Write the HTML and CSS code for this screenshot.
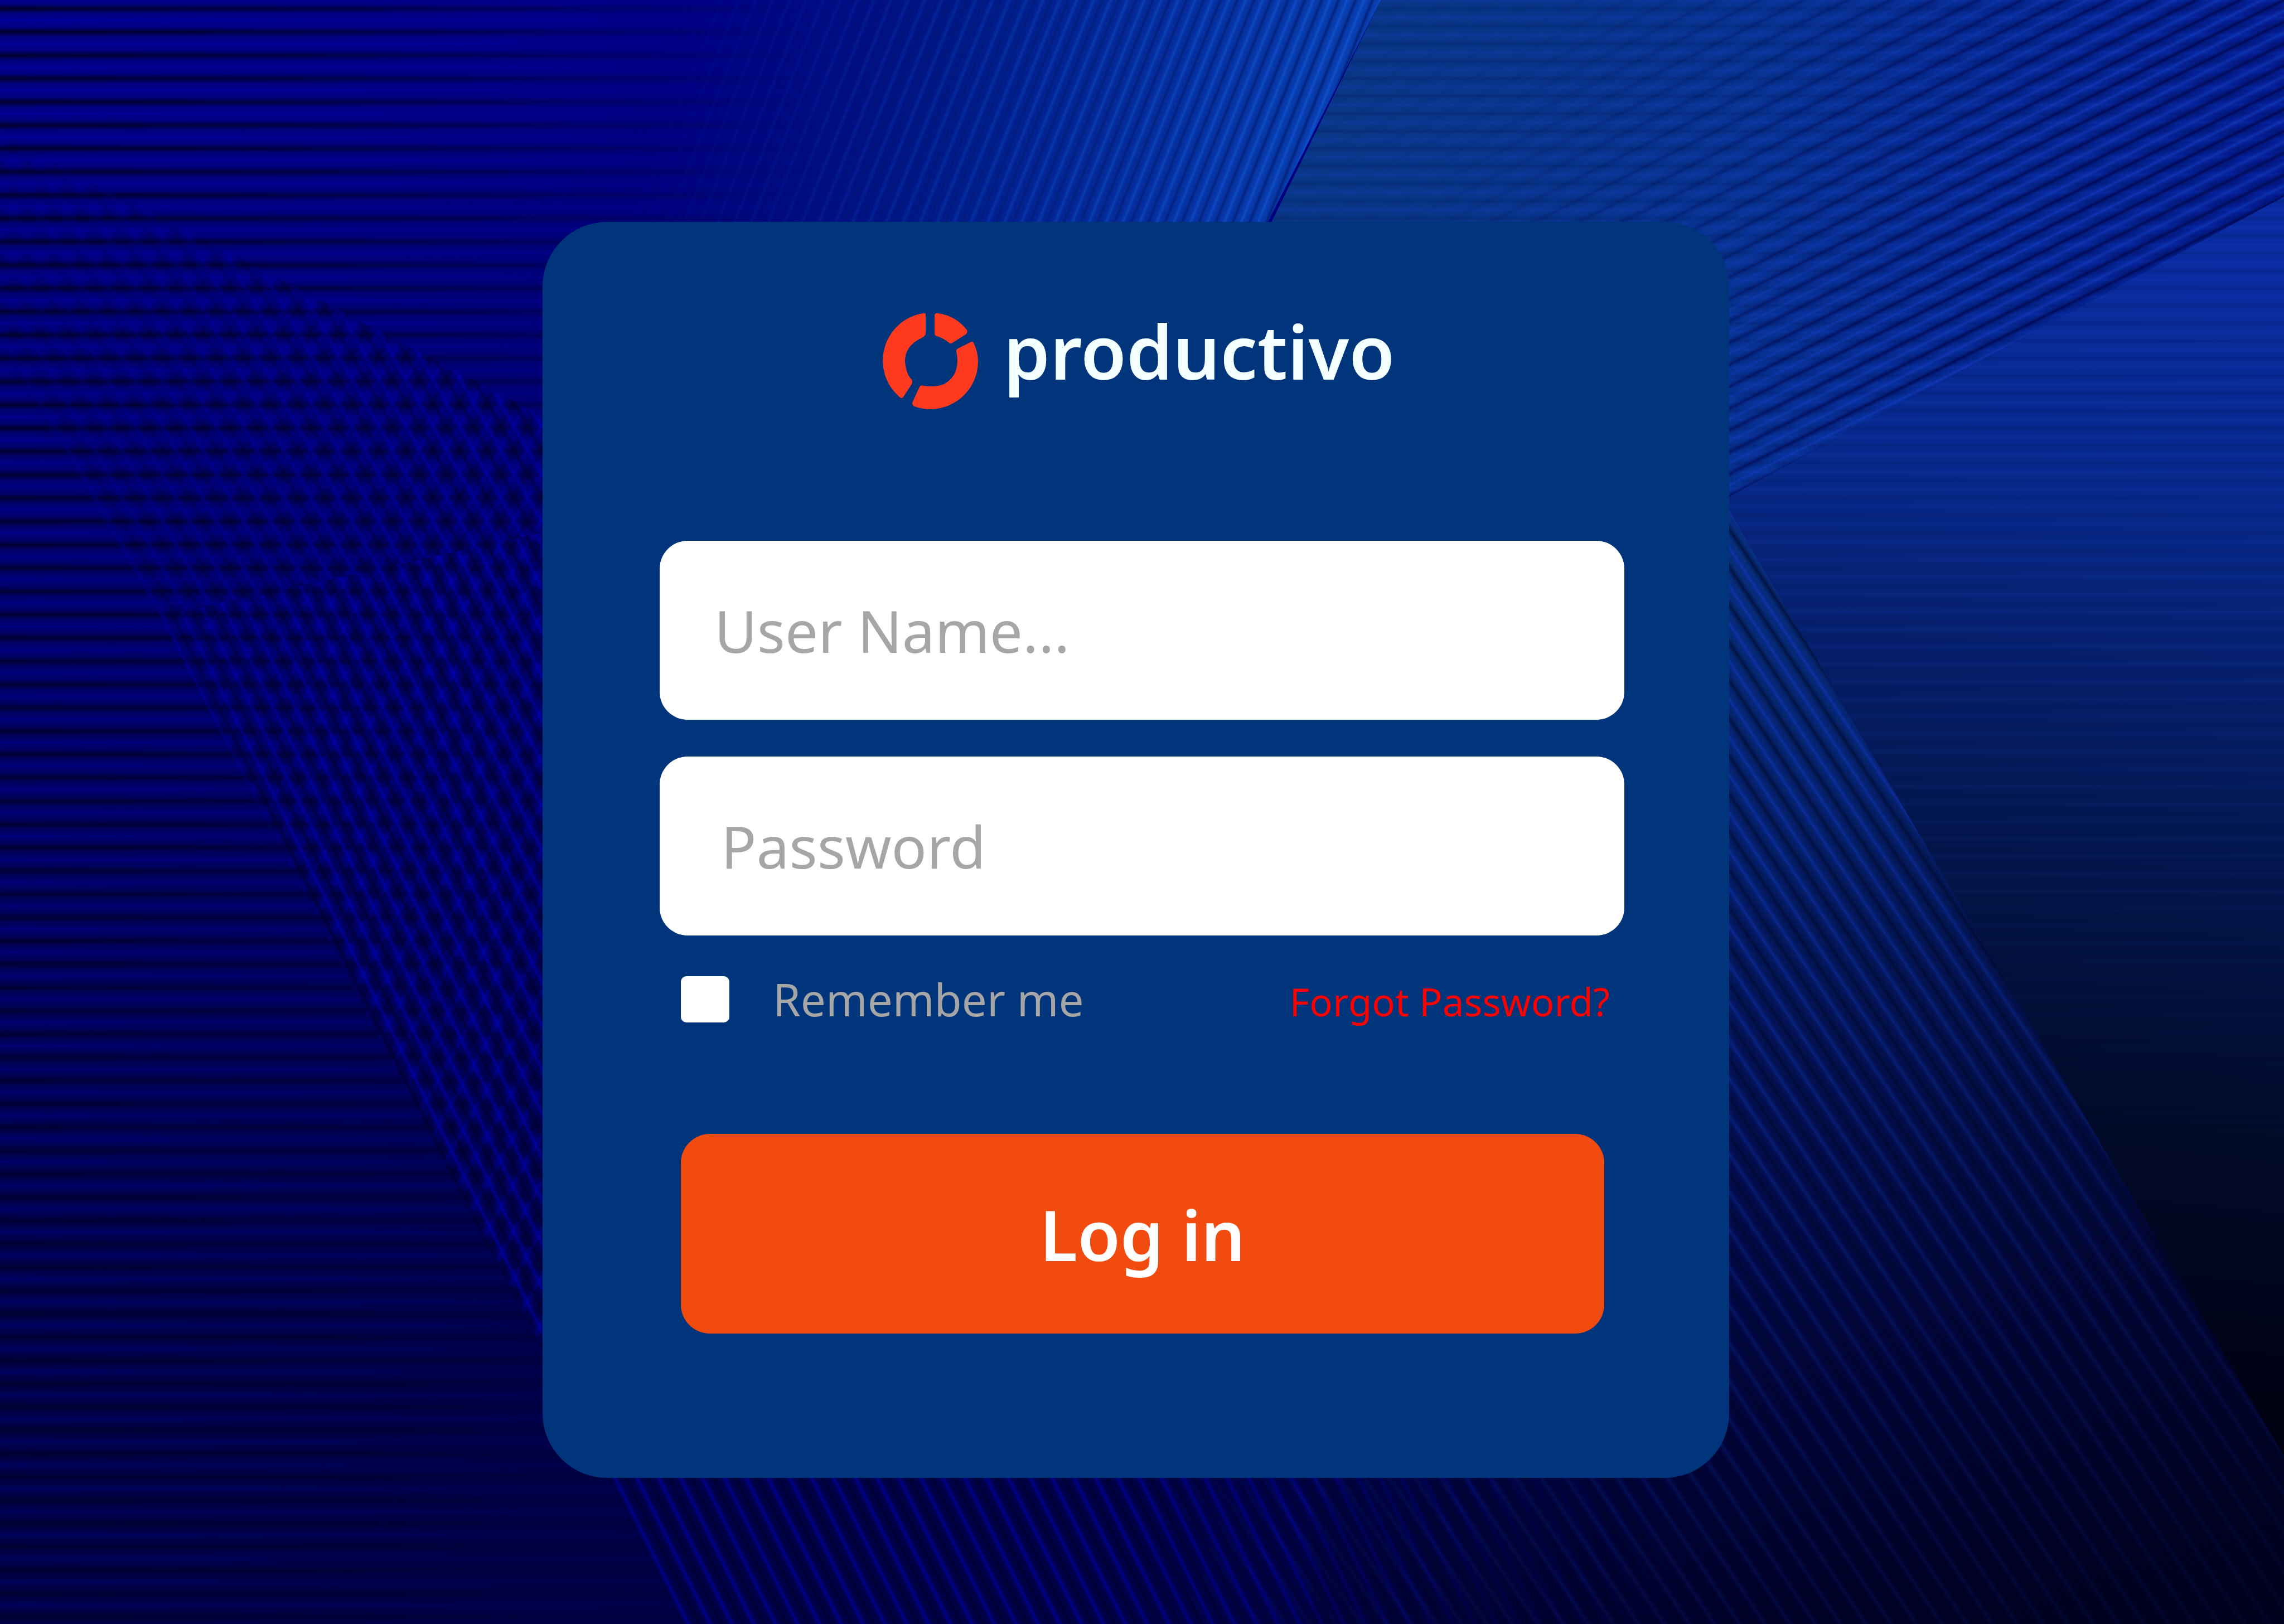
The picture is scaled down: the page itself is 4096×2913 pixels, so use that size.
FILE: index.html
```html
<!DOCTYPE html>
<html lang="en">
<head>
<meta charset="utf-8">
<meta name="viewport" content="width=device-width, initial-scale=1">
<title>Productivo – Log in</title>
<link rel="stylesheet" href="styles.css">
</head>
<body>
<svg class="backdrop" viewBox="0 0 1568 1115" preserveAspectRatio="none" aria-hidden="true">
  <defs>
    <linearGradient id="left-base" x1="0" y1="0" x2="0" y2="1">
      <stop offset="0" stop-color="#00008a"/>
      <stop offset=".3" stop-color="#000070"/>
      <stop offset=".6" stop-color="#00005a"/>
      <stop offset=".85" stop-color="#000046"/>
      <stop offset="1" stop-color="#000044"/>
    </linearGradient>
    <linearGradient id="top-glow" gradientUnits="userSpaceOnUse" x1="400" y1="0" x2="930" y2="120">
      <stop offset="0" stop-color="#000078" stop-opacity="0"/>
      <stop offset=".45" stop-color="#001684"/>
      <stop offset="1" stop-color="#0a42b4"/>
    </linearGradient>
    <linearGradient id="fan-base" gradientUnits="userSpaceOnUse" x1="900" y1="60" x2="1568" y2="160">
      <stop offset="0" stop-color="#0a3886"/>
      <stop offset=".45" stop-color="#083490"/>
      <stop offset="1" stop-color="#041890"/>
    </linearGradient>
    <linearGradient id="right-base" gradientUnits="userSpaceOnUse" x1="1480" y1="170" x2="1400" y2="940">
      <stop offset="0" stop-color="#0a2ca2"/>
      <stop offset=".22" stop-color="#08288a"/>
      <stop offset=".5" stop-color="#041852"/>
      <stop offset=".75" stop-color="#020c2c"/>
      <stop offset="1" stop-color="#000214"/>
    </linearGradient>
    <linearGradient id="weave-base" gradientUnits="userSpaceOnUse" x1="1220" y1="380" x2="1220" y2="1115">
      <stop offset="0" stop-color="#08307c"/>
      <stop offset=".35" stop-color="#041a60"/>
      <stop offset=".7" stop-color="#020850"/>
      <stop offset="1" stop-color="#000038"/>
    </linearGradient>
    <linearGradient id="corner-shade" gradientUnits="userSpaceOnUse" x1="1100" y1="700" x2="1540" y2="1115">
      <stop offset="0" stop-color="#000010" stop-opacity="0"/>
      <stop offset="1" stop-color="#000010" stop-opacity=".7"/>
    </linearGradient>

    <!-- Repeating soft stripes -->
    <linearGradient id="rows" gradientUnits="userSpaceOnUse" x1="0" y1="-2" x2="0" y2="6" spreadMethod="reflect">
      <stop offset="0" stop-color="#0000b8" stop-opacity=".4"/>
      <stop offset=".5" stop-color="#000060" stop-opacity=".1"/>
      <stop offset=".75" stop-color="#00001c" stop-opacity=".4"/>
      <stop offset="1" stop-color="#00001c" stop-opacity=".85"/>
    </linearGradient>
    <linearGradient id="dots" gradientUnits="userSpaceOnUse" x1="0" y1="0" x2="7" y2="-4" spreadMethod="reflect">
      <stop offset="0" stop-color="#0000d0" stop-opacity=".5"/>
      <stop offset=".5" stop-color="#000060" stop-opacity="0"/>
      <stop offset="1" stop-color="#000020" stop-opacity=".55"/>
    </linearGradient>
    <linearGradient id="cross" gradientUnits="userSpaceOnUse" x1="0" y1="0" x2="7" y2="4" spreadMethod="reflect">
      <stop offset="0" stop-color="#0000d0" stop-opacity=".4"/>
      <stop offset=".5" stop-color="#000060" stop-opacity="0"/>
      <stop offset="1" stop-color="#000020" stop-opacity=".5"/>
    </linearGradient>
    <linearGradient id="steep" gradientUnits="userSpaceOnUse" x1="948" y1="0" x2="953" y2="2" spreadMethod="reflect">
      <stop offset="0" stop-color="#1260e0" stop-opacity=".6"/>
      <stop offset=".5" stop-color="#0838a0" stop-opacity="0"/>
      <stop offset="1" stop-color="#00145c" stop-opacity=".7"/>
    </linearGradient>
    <linearGradient id="fan" gradientUnits="userSpaceOnUse" x1="1568" y1="135" x2="1571" y2="141" spreadMethod="reflect">
      <stop offset="0" stop-color="#00084c" stop-opacity=".85"/>
      <stop offset=".5" stop-color="#04208c" stop-opacity="0"/>
      <stop offset="1" stop-color="#1240c4" stop-opacity=".6"/>
    </linearGradient>
    <linearGradient id="down" gradientUnits="userSpaceOnUse" x1="1187" y1="350" x2="1193" y2="346" spreadMethod="reflect">
      <stop offset="0" stop-color="#1038c0" stop-opacity=".65"/>
      <stop offset=".5" stop-color="#04186c" stop-opacity="0"/>
      <stop offset="1" stop-color="#000824" stop-opacity=".7"/>
    </linearGradient>
    <linearGradient id="down-left" gradientUnits="userSpaceOnUse" x1="150" y1="500" x2="156" y2="497" spreadMethod="reflect">
      <stop offset="0" stop-color="#0000dc" stop-opacity=".55"/>
      <stop offset=".5" stop-color="#00006c" stop-opacity="0"/>
      <stop offset="1" stop-color="#000020" stop-opacity=".7"/>
    </linearGradient>
    <linearGradient id="faint-rows" gradientUnits="userSpaceOnUse" x1="0" y1="0" x2="0" y2="6" spreadMethod="reflect">
      <stop offset="0" stop-color="#1a44d0" stop-opacity=".22"/>
      <stop offset=".5" stop-color="#082890" stop-opacity="0"/>
      <stop offset="1" stop-color="#001040" stop-opacity=".22"/>
    </linearGradient>

    <!-- Fades for each stripe field -->
    <linearGradient id="fade-rows" x1="0" y1="0" x2="1" y2="0">
      <stop offset="0" stop-color="#fff"/>
      <stop offset=".4" stop-color="#bbb"/>
      <stop offset=".75" stop-color="#555"/>
      <stop offset="1" stop-color="#000"/>
    </linearGradient>
    <linearGradient id="fade-rows-down" x1="0" y1="0" x2="0" y2="1">
      <stop offset="0" stop-color="#000" stop-opacity="0"/>
      <stop offset=".6" stop-color="#000" stop-opacity=".3"/>
      <stop offset="1" stop-color="#000" stop-opacity=".5"/>
    </linearGradient>
    <linearGradient id="fade-steep" gradientUnits="userSpaceOnUse" x1="450" y1="0" x2="930" y2="80">
      <stop offset="0" stop-color="#000"/>
      <stop offset=".5" stop-color="#777"/>
      <stop offset="1" stop-color="#fff"/>
    </linearGradient>
    <linearGradient id="fade-fan" gradientUnits="userSpaceOnUse" x1="1040" y1="40" x2="1330" y2="240">
      <stop offset="0" stop-color="#111"/>
      <stop offset=".5" stop-color="#777"/>
      <stop offset="1" stop-color="#fff"/>
    </linearGradient>
    <linearGradient id="fade-down" gradientUnits="userSpaceOnUse" x1="1200" y1="350" x2="1250" y2="1115">
      <stop offset="0" stop-color="#fff"/>
      <stop offset=".6" stop-color="#bbb"/>
      <stop offset="1" stop-color="#777"/>
    </linearGradient>
    <linearGradient id="fade-weave" gradientUnits="userSpaceOnUse" x1="760" y1="0" x2="1187" y2="0">
      <stop offset="0" stop-color="#000"/>
      <stop offset="1" stop-color="#fff"/>
    </linearGradient>
    <linearGradient id="fade-dots" gradientUnits="userSpaceOnUse" x1="0" y1="200" x2="330" y2="320">
      <stop offset="0" stop-color="#222"/>
      <stop offset="1" stop-color="#ddd"/>
    </linearGradient>
    <linearGradient id="fade-cross" gradientUnits="userSpaceOnUse" x1="60" y1="0" x2="330" y2="0">
      <stop offset="0" stop-color="#222"/>
      <stop offset="1" stop-color="#ddd"/>
    </linearGradient>
    <linearGradient id="fade-right" x1="0" y1="0" x2="0" y2="1">
      <stop offset="0" stop-color="#fff"/>
      <stop offset=".45" stop-color="#888"/>
      <stop offset=".7" stop-color="#000"/>
    </linearGradient>
    <mask id="m-rows"><rect width="560" height="1115" fill="url(#fade-rows)"/><rect width="560" height="1115" fill="url(#fade-rows-down)"/></mask>
    <mask id="m-steep"><rect width="1568" height="1115" fill="url(#fade-steep)"/></mask>
    <mask id="m-fan"><rect width="1568" height="1115" fill="url(#fade-fan)"/></mask>
    <mask id="m-down"><rect width="1568" height="1115" fill="url(#fade-down)"/></mask>
    <mask id="m-weave"><rect width="1568" height="1115" fill="url(#fade-weave)"/></mask>
    <mask id="m-dots"><rect width="1568" height="1115" fill="url(#fade-dots)"/></mask>
    <mask id="m-cross"><rect width="1568" height="1115" fill="url(#fade-cross)"/></mask>
    <mask id="m-right"><rect width="1568" height="1115" fill="url(#fade-right)"/></mask>
  </defs>

  <rect width="1568" height="1115" fill="url(#left-base)"/>
  <path d="M360 0H948L780 330H360Z" fill="url(#top-glow)"/>
  <path d="M360 0H948L780 330H360Z" fill="url(#steep)" mask="url(#m-steep)"/>
  <rect width="560" height="1115" fill="url(#rows)" mask="url(#m-rows)"/>
  <path d="M0 92L400 300V980L110 423L0 240Z" fill="url(#cross)" mask="url(#m-cross)"/>
  <path d="M0 92L400 300V360L110 423L0 240Z" fill="url(#dots)" mask="url(#m-dots)"/>
  <path d="M110 423L400 360V700L1200 900V1115H470Z" fill="url(#down-left)" mask="url(#m-dots)"/>

  <path d="M948 0H1568V135L1187 341H780Z" fill="url(#fan-base)"/>
  <path d="M948 0H1568V135L1187 341H780Z" fill="url(#faint-rows)"/>
  <path d="M948 0H1568V135L1187 341H780Z" fill="url(#fan)" mask="url(#m-fan)"/>

  <path d="M1568 135V1000L1187 350V341Z" fill="url(#right-base)"/>
  <path d="M1568 135V1000L1187 350V341Z" fill="url(#faint-rows)" mask="url(#m-right)"/>

  <g mask="url(#m-weave)">
    <path d="M1187 350L1568 1000V1115H760V900H1187Z" fill="url(#weave-base)"/>
    <path d="M1187 350L1568 1000V1115H760V900H1187Z" fill="url(#down)" mask="url(#m-down)"/>
  </g>
  <path d="M1187 350L1568 1000V1115H900V900Z" fill="url(#corner-shade)"/>
</svg>

<main class="page">
  <form class="card" action="#" method="post">
    <h1 class="logo">
      <svg class="logo-mark" viewBox="0 0 171 173" aria-hidden="true">
        <path d="M77 2V36Q77 42 70 45Q39 60 40 88Q42 110 52 120Q54 124 52 128L37 151Q34 155 30 151A86 86 0 0 1 72 1Q77 0 77 3Z"/>
        <path d="M93 4Q94 0 100 1Q132 6 151 31Q153 34 150 38L125 54Q121 57 118 53Q108 45 97 42Q93 41 93 37Z"/>
        <path d="M157 53Q161 50 163 54Q171 70 171 88A86 86 0 0 1 87 173Q70 173 57 168Q51 165 54 159L66 133Q68 129 73 131Q95 134 110 128Q134 115 134 85Q134 78 132 70Q131 66 135 64Z"/>
      </svg>
      <span class="logo-name">productivo</span>
    </h1>

    <div class="fields">
      <input class="field" type="text" name="username" placeholder="User Name..." aria-label="User Name" autocomplete="username">
      <input class="field field-password" type="password" name="password" placeholder="Password" aria-label="Password" autocomplete="current-password">
    </div>

    <div class="options">
      <label class="remember" for="remember"><input class="tick" type="checkbox" id="remember" name="remember">Remember me</label>
      <a class="forgot" href="#forgot">Forgot Password?</a>
    </div>

    <button class="submit" type="submit">Log in</button>
  </form>
</main>
</body>
</html>
```
FILE: styles.css
```css
*,
*::before,
*::after {
  box-sizing: border-box;
}

body {
  margin: 0;
  min-height: 100vh;
  background: #000060;
  font-family: "Noto Sans", "Open Sans", sans-serif;
}

.backdrop {
  position: fixed;
  inset: 0;
  z-index: -1;
  width: 100%;
  height: 100%;
}

.page {
  display: flex;
  justify-content: center;
  padding: 398px 22px 262px 0;
}

.card {
  display: flex;
  flex-direction: column;
  width: 100%;
  max-width: 2128px;
  padding: 163px 188px 259px 210px;
  border-radius: 116px;
  background: #00357b;
}

.logo {
  display: flex;
  justify-content: center;
  align-items: flex-start;
  gap: 46px;
  margin: 0 12px 236px 0;
  font-size: 133px;
  font-weight: 600;
  line-height: 138px;
  color: #f4ffff;
}

.logo-mark {
  width: 171px;
  height: 173px;
  fill: #ff3a1f;
}

.fields {
  display: flex;
  flex-direction: column;
  gap: 66px;
}

.field {
  width: 100%;
  height: 321px;
  padding: 0 98px;
  border: 0;
  border-radius: 50px;
  background: #fff;
  font: inherit;
  font-size: 105px;
  color: #333;
}

.field-password {
  padding-left: 110px;
}

.field::placeholder {
  color: #a6a6a6;
  opacity: 1;
}

.options {
  display: flex;
  justify-content: space-between;
  align-items: flex-end;
  margin: 59px 26px 187px 38px;
}

.remember {
  display: flex;
  align-items: center;
  gap: 78px;
  font-size: 80px;
  line-height: 110px;
  color: #a6a6a6;
}

.tick {
  appearance: none;
  width: 87px;
  height: 83px;
  margin: 0;
  border-radius: 10px;
  background: #fff;
}

.tick:checked {
  background: #f24b0f;
}

.forgot {
  font-size: 69px;
  line-height: 102px;
  color: #f00;
  text-decoration: none;
}

.submit {
  height: 358px;
  margin: 0 36px 0 38px;
  border: 0;
  border-radius: 52px;
  background: #f24b0f;
  font: inherit;
  font-size: 124px;
  font-weight: 600;
  color: #fff;
  cursor: pointer;
}
```
